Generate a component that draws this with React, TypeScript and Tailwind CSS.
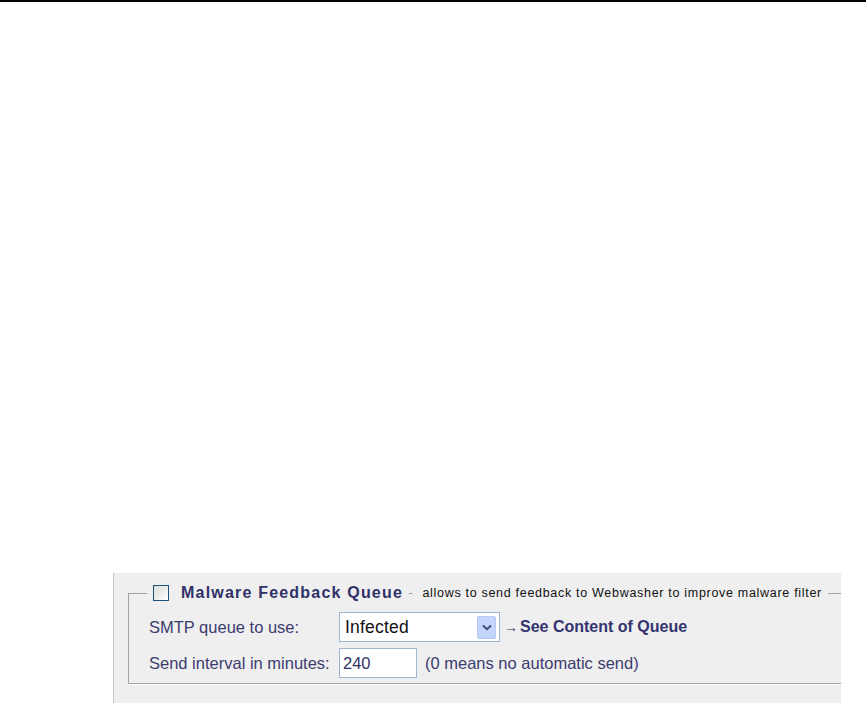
import React from "react";

export default function App() {
  const sans = { fontFamily: '"Liberation Sans", Arial, sans-serif' } as React.CSSProperties;
  return (
    <div className="w-[866px] h-[703px] bg-white border-t-2 border-black overflow-hidden flex flex-col" style={sans}>
      <div className="h-[571px] shrink-0" />
      <div className="ml-[113px] w-[728px] flex-1 bg-[#efefef] border-l border-[#c4c4c4] pt-[11px] overflow-hidden">
        <fieldset className="ml-[14px] w-[800px] border-l border-t border-b border-[#a3a3a3] pl-[20px] pb-[5px] shadow-[0_1px_0_#ffffff]">
          <legend className="-ml-[2px] pl-[6px] pr-[6px] h-[18px] flex items-center">
            <span className="w-[16px] h-[16px] border border-[#1c5180] bg-gradient-to-br from-[#dcdcd7] to-[#ffffff] inline-block shrink-0" />
            <span className="ml-[12px] text-[16px] font-bold text-[#2f3168] tracking-[1.2px] leading-none whitespace-nowrap">
              Malware Feedback Queue
            </span>
            <span className="ml-[6px] text-[10px] text-[#888888] leading-none">-</span>
            <span className="ml-[10px] text-[12.5px] text-[#111111] tracking-[0.7px] leading-none whitespace-nowrap">
              allows to send feedback to Webwasher to improve malware filter
            </span>
          </legend>
          <div className="mt-[10px] grid grid-cols-[190px_1fr] gap-y-[6px] items-center text-[16.5px] text-[#3c3c6e]">
            <div>SMTP queue to use:</div>
            <div className="flex items-center">
              <div className="w-[161px] h-[30px] border border-[#9eb3cf] bg-white flex items-center pl-[5px] pr-[3px]">
                <span className="flex-1 text-[17.5px] text-[#111111] tracking-[0.2px]">Infected</span>
                <span className="w-[19px] h-[23px] rounded-[2px] bg-[#c3d5fa] border border-[#b4c8f2] flex items-center justify-center">
                  <svg width="10" height="7" viewBox="0 0 10 7">
                    <path d="M1 1.5 L5 5.2 L9 1.5" fill="none" stroke="#3d4f78" strokeWidth="2" />
                  </svg>
                </span>
              </div>
              <span className="ml-[4px] text-[14px] text-[#333366] leading-none">→</span>
              <span className="ml-[2px] text-[16px] font-bold text-[#333370]">See Content of Queue</span>
            </div>
            <div>Send interval in minutes:</div>
            <div className="flex items-center">
              <div className="w-[78px] h-[30px] border border-[#9eb3cf] bg-white flex items-center pl-[3px] text-[#333366]">
                240
              </div>
              <span className="ml-[8px]">(0 means no automatic send)</span>
            </div>
          </div>
        </fieldset>
      </div>
    </div>
  );
}
